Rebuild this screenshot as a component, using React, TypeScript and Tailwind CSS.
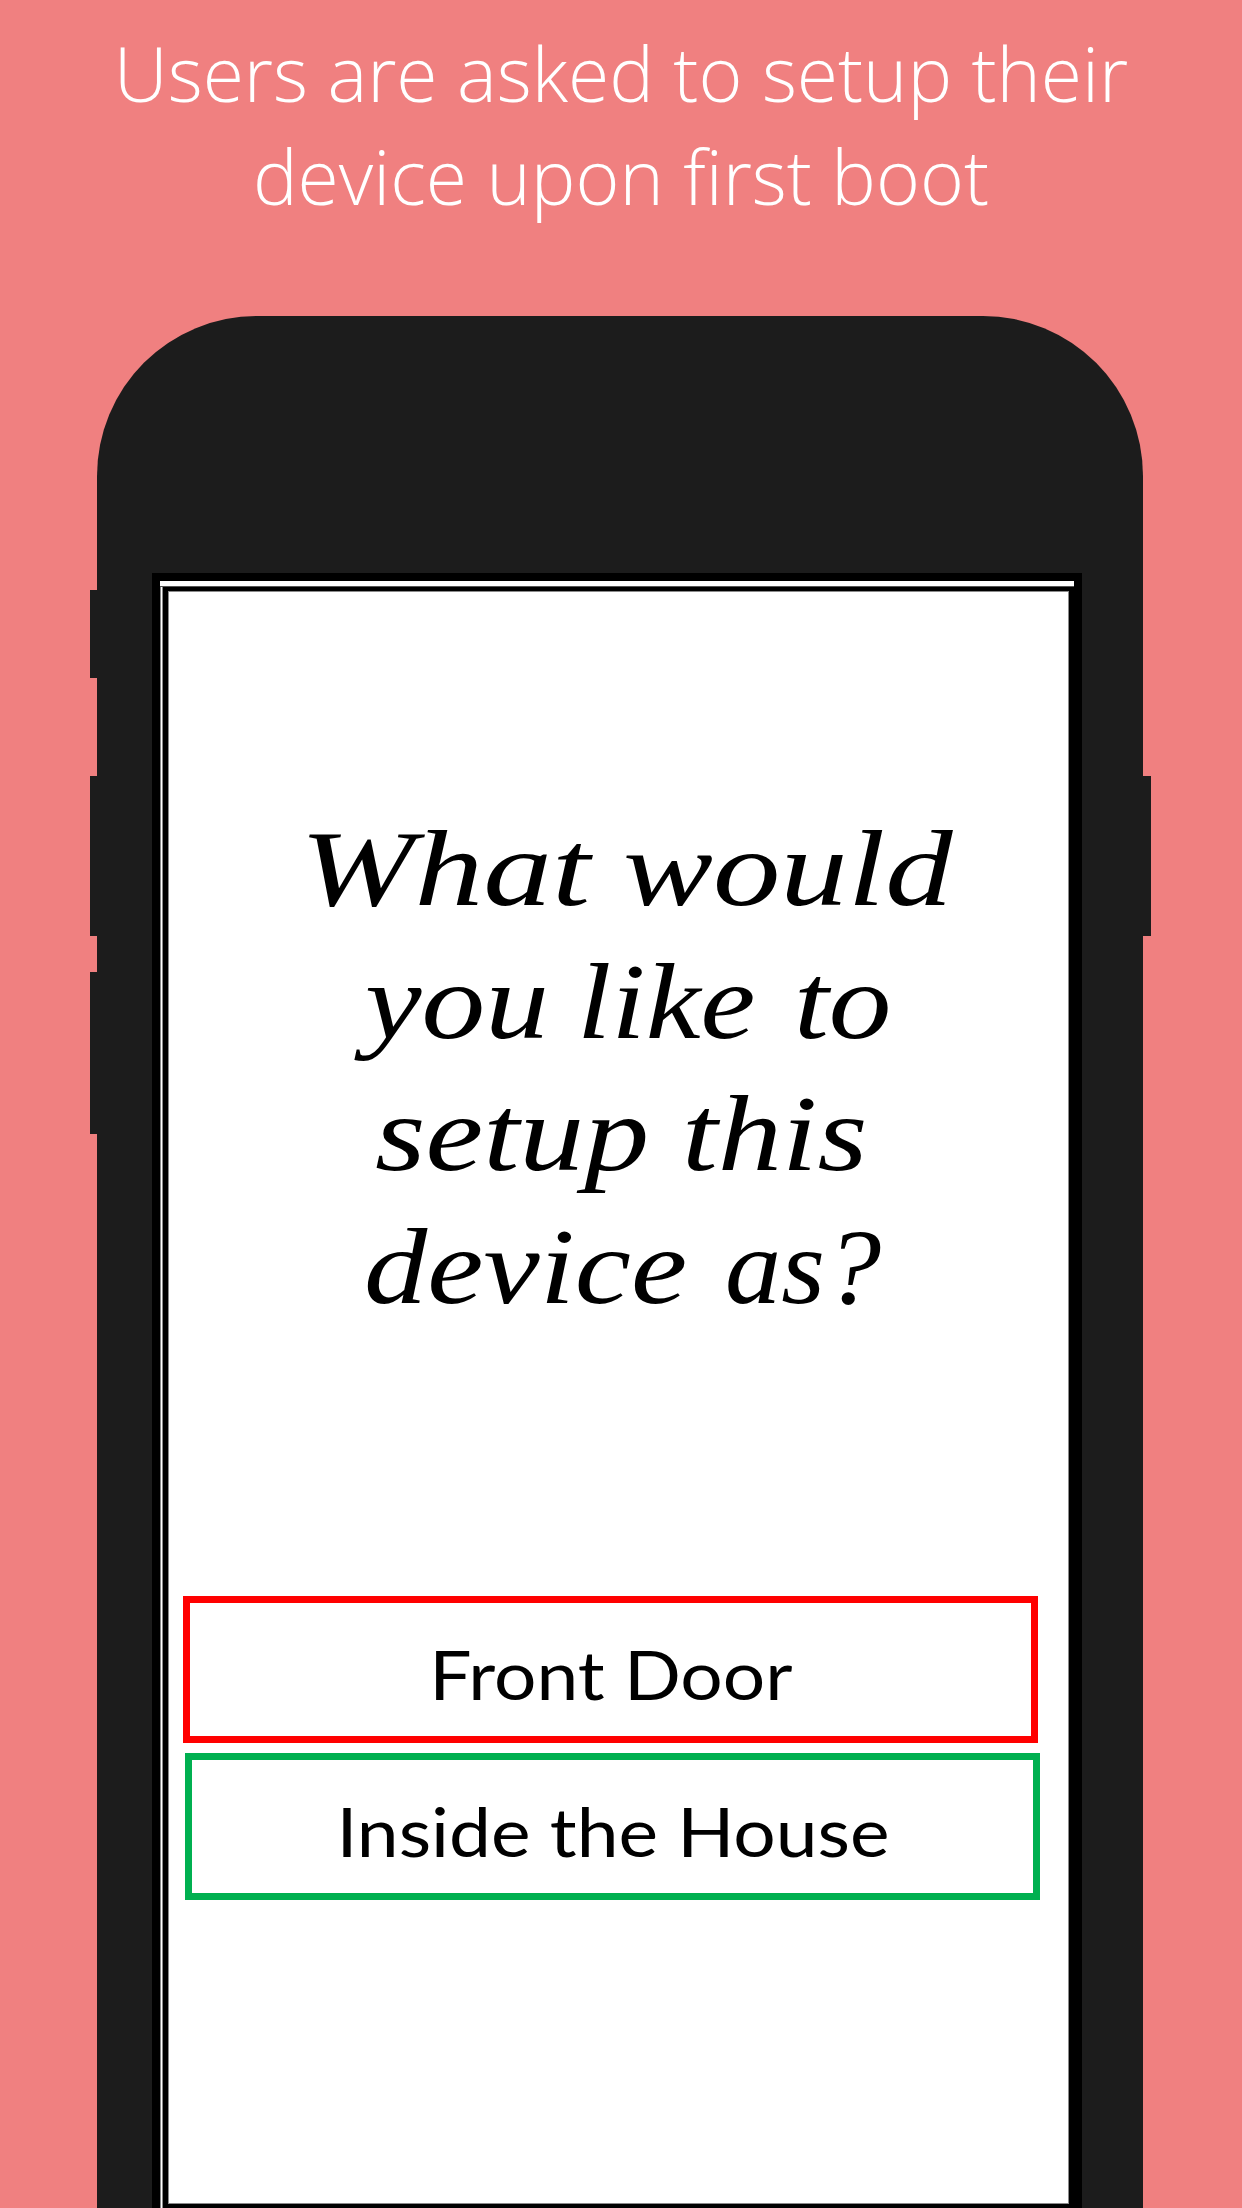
type ButtonProps = { label: string; className: string };

function ChoiceButton({ label, className }: ButtonProps) {
  return (
    <button
      type="button"
      className={`flex h-[147px] w-[855px] items-center justify-center border-[7px] pt-[9px] font-['Lato',sans-serif] text-[68px] leading-[82px] text-black ${className}`}
    >
      <span className="inline-block scale-x-[1.102] whitespace-nowrap">{label}</span>
    </button>
  );
}

type Word = { text: string; box: string; stretch: string };

const lines: { indent: string; words: Word[] }[] = [
  {
    indent: "pl-[140px] gap-[33px]",
    words: [
      { text: "What", box: "w-[284px]", stretch: "scale-x-[1.285] -ml-[9px]" },
      { text: "would", box: "w-[337px]", stretch: "scale-x-[1.26] -ml-[3px]" },
    ],
  },
  {
    indent: "pl-[187px]",
    words: [
      { text: "you", box: "w-[189px] mr-[38px]", stretch: "scale-x-[1.19] ml-[9px]" },
      { text: "like", box: "w-[171px] mr-[45px]", stretch: "scale-x-[1.155] -ml-[6px]" },
      { text: "to", box: "w-[90px]", stretch: "scale-x-[1.17] -ml-[5px]" },
    ],
  },
  {
    indent: "pl-[207px] gap-[41px]",
    words: [
      { text: "setup", box: "w-[270px]", stretch: "scale-x-[1.214] -ml-px" },
      { text: "this", box: "w-[179px]", stretch: "scale-x-[1.2] -ml-[5px]" },
    ],
  },
  {
    indent: "pl-[199px] gap-[42px]",
    words: [
      { text: "device", box: "w-[318px]", stretch: "scale-x-[1.183] -ml-[4px]" },
      { text: "as?", box: "w-[153px]", stretch: "scale-x-[1.05] -ml-[3px]" },
    ],
  },
];

function Question() {
  return (
    <h2 className="font-['Lucida_Calligraphy','Liberation_Serif',serif] text-[107px] leading-[132.5px] text-black italic">
      {lines.map((line, i) => (
        <span key={i} className={`flex ${line.indent}`}>
          {line.words.map((word) => (
            <span key={word.text} className={`block shrink-0 whitespace-nowrap ${word.box}`}>
              <span className={`inline-block origin-left ${word.stretch}`}>{word.text}</span>{" "}
            </span>
          ))}
        </span>
      ))}
    </h2>
  );
}

function Screen() {
  return (
    <div className="ml-[55px] flex h-[1635px] w-[930px] flex-col bg-black pt-2">
      <div className="ml-2 h-[6px] w-[914px] border-b border-[#555] bg-white" />
      <div className="ml-2 flex h-[1621px]">
        <div className="w-[3px] border-x border-[#8a8a8a] bg-white" />
        <div className="mt-[4px] ml-[5px] flex h-[1613px] w-[901px] flex-col border border-[#8a8a8a] bg-white pt-[211px]">
          <Question />
          <div className="mt-[263px] ml-[14px] flex flex-col gap-[10px]">
            <ChoiceButton label="Front Door" className="border-[#ff0000]" />
            <ChoiceButton label="Inside the House" className="ml-[2px] border-[#00b050]" />
          </div>
        </div>
      </div>
    </div>
  );
}

export default function App() {
  return (
    <main className="h-[2208px] w-[1242px] overflow-hidden bg-[#f08080]">
      <h1 className="h-[316px] pt-[22px] text-center font-['Open_Sans',sans-serif] text-[75px] leading-[103px] font-light text-white">
        Users are asked to setup their
        <br />
        device upon first boot
      </h1>
      <div className="relative ml-[97px] h-[1892px] w-[1046px] rounded-t-[160px] bg-[#1c1c1c] pt-[257px]">
        <div className="absolute top-[274px] -left-[7px] h-[88px] w-[8px] bg-[#1c1c1c]" />
        <div className="absolute top-[460px] -left-[7px] h-[160px] w-[8px] bg-[#1c1c1c]" />
        <div className="absolute top-[656px] -left-[7px] h-[162px] w-[8px] bg-[#1c1c1c]" />
        <div className="absolute top-[460px] -right-[8px] h-[160px] w-[9px] bg-[#1c1c1c]" />
        <Screen />
      </div>
    </main>
  );
}
